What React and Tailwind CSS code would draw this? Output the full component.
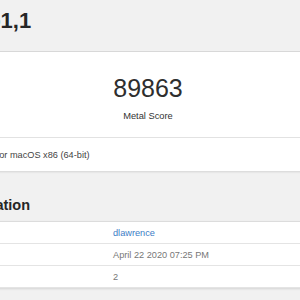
export default function App() {
  const rows = [
    { label: 'User', value: 'dlawrence', link: true },
    { label: 'Upload Date', value: 'April 22 2020 07:25 PM' },
    { label: 'Views', value: '2' },
  ]

  return (
    <div className="w-[300px] h-[300px] overflow-hidden bg-[#f1f1f1] font-['Liberation_Sans',Arial,sans-serif]">
      <div className="-ml-[104px] w-[504px]">
        <div className="h-[52px] pt-[7px] border-b border-[#dadada]">
          <h1 className="ml-[19px] text-[22px] leading-[28px] font-bold text-[#262626]">iMacPro1,1</h1>
        </div>

        <div className="bg-white shadow-[0_1px_2px_rgba(0,0,0,0.12)]">
          <div className="h-[86px] pt-[21px] flex flex-col items-center border-b border-[#e2e2e2]">
            <div className="text-[25px] leading-[30px] font-light text-[#2e2e2e]">89863</div>
            <div className="mt-[7px] text-[9.3px] leading-[12px] text-[#333]">Metal Score</div>
          </div>
          <div className="h-[33px] flex items-center text-[9.2px] leading-[12px] text-[#444]">
            Geekbench 5.1.0 Tryout for macOS x86 (64-bit)
          </div>
        </div>

        <h2 className="mt-[25px] mb-[7px] ml-[6px] text-[14.5px] leading-[18px] font-bold text-[#262626]">
          Result Information
        </h2>

        <div className="bg-white border-t border-[#dcdcdc] shadow-[0_1px_2px_rgba(0,0,0,0.12)]">
          {rows.map((row) => (
            <div key={row.label} className="h-[22px] flex items-center border-b border-[#e4e4e4] text-[9.2px] leading-[12px]">
              <div className="w-[217px] text-[#444]">{row.label}</div>
              <div className={row.link ? 'text-[#3b7dc6]' : 'text-[#777]'}>{row.value}</div>
            </div>
          ))}
        </div>
      </div>
    </div>
  )
}
